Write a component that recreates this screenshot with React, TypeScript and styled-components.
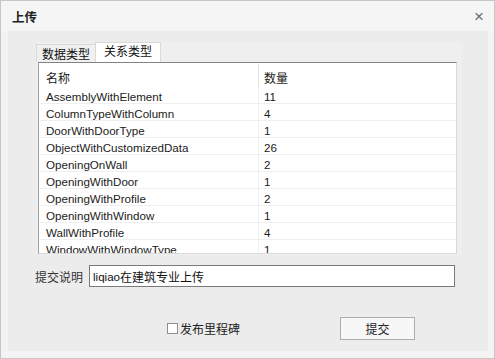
import React from 'react';
import styled, { createGlobalStyle } from 'styled-components';

const GlobalStyle = createGlobalStyle`
    html, body {
        margin: 0;
        padding: 0;
        background: #ffffff;
    }
    body {
        font-family: "Noto Sans", "Noto Sans CJK SC", sans-serif;
        font-size: 12px;
        color: #1b1b1b;
    }
`;

const CJK = `"Noto Sans CJK SC", "Noto Sans", sans-serif`;
const LATIN = `"Liberation Sans", "Noto Sans CJK SC", sans-serif`;

const Dialog = styled.div`
    width: 495px;
    height: 359px;
    box-sizing: border-box;
    border: 1px solid #c6c6c6;
    background: #f3f3f3;
    display: flex;
    flex-direction: column;
`;

const TitleBar = styled.div`
    height: 30px;
    flex: none;
    display: flex;
    align-items: center;
    justify-content: space-between;
    padding: 0 10px 0 11px;
    background: #f5f5f5;
`;

const Title = styled.div`
    font-family: ${CJK};
    font-weight: bold;
    font-size: 12.5px;
    color: #222;
`;

const CloseButton = styled.div`
    font-family: ${LATIN};
    font-size: 17px;
    color: #6d6d6d;
    line-height: 1;
`;

const Body = styled.div`
    flex: 1;
    padding: 0 6px 7px 7px;
    display: flex;
`;

const Panel = styled.div`
    flex: 1;
    background: #ececec;
    display: flex;
    flex-direction: column;
    padding: 11px 28px 0 28px;
`;

const TabControl = styled.div`
    background: #efefef;
    margin-right: -1px;
    height: 213px;
    display: flex;
    flex-direction: column;
`;

const TabStrip = styled.div`
    display: flex;
    align-items: flex-end;
    height: 20px;
`;

const Tab = styled.div<{ active?: boolean }>`
    font-family: ${CJK};
    font-size: 12px;
    line-height: 1;
    box-sizing: border-box;
    height: ${p => (p.active ? 20 : 18)}px;
    padding: ${p => (p.active ? '2px 8px 0 8px' : '3px 5px 0 5px')};
    border: 1px solid #d9d9d9;
    border-bottom: none;
    background: ${p => (p.active ? '#ffffff' : '#f0f0f0')};
    color: #111;
    margin-left: ${p => (p.active ? '-1px' : '0')};
`;

const TableBox = styled.div`
    margin-left: 2px;
    width: 419px;
    height: 192px;
    box-sizing: border-box;
    background: #ffffff;
    border-top: 1px solid #828282;
    border-left: 1px solid #a0a0a0;
    border-right: 1px solid #d9d9d9;
    border-bottom: 1px solid #d9d9d9;
    overflow: hidden;
`;

const Row = styled.div<{ header?: boolean }>`
    display: grid;
    grid-template-columns: 219px 1fr;
    height: ${p => (p.header ? 24 : 17)}px;
    box-sizing: border-box;
    border-bottom: ${p => (p.header ? 'none' : '1px solid #efefef')};
`;

const Cell = styled.div<{ header?: boolean; divider?: boolean }>`
    display: flex;
    align-items: center;
    padding-left: ${p => (p.divider ? 5 : 7)}px;
    padding-top: ${p => (p.header ? 3 : 2)}px;
    font-family: ${p => (p.header ? CJK : LATIN)};
    font-size: ${p => (p.header ? 12 : 11.6)}px;
    color: #1b1b1b;
    white-space: nowrap;
    border-left: ${p => (p.divider ? `1px solid ${p.header ? '#e2e2e2' : '#efefef'}` : 'none')};
    margin: ${p => (p.header ? '1px 0 0 0' : '0')};
`;

const FormRow = styled.div`
    display: flex;
    align-items: center;
    margin-top: 10px;
    margin-left: -1px;
`;

const Label = styled.div`
    font-family: ${CJK};
    font-size: 12px;
    color: #333;
    width: 54px;
`;

const TextInput = styled.div`
    width: 366px;
    height: 22px;
    box-sizing: border-box;
    border: 1px solid #7a7a7a;
    background: #fff;
    display: flex;
    align-items: center;
    padding-left: 3px;
    font-family: ${CJK};
    font-size: 12px;
    color: #111;
`;

const Latin = styled.span`
    font-family: ${LATIN};
    font-size: 11.6px;
`;

const ActionRow = styled.div`
    display: flex;
    align-items: center;
    margin-top: 30px;
    padding-left: 131px;
`;

const CheckLabel = styled.label`
    display: flex;
    align-items: center;
    gap: 2px;
    font-family: ${CJK};
    font-size: 12px;
    color: #222;
`;

const CheckBox = styled.span`
    width: 11px;
    height: 11px;
    box-sizing: border-box;
    border: 1px solid #8f8f8f;
    background: #fff;
    display: inline-block;
`;

const Button = styled.div`
    margin-left: 100px;
    width: 75px;
    height: 23px;
    box-sizing: border-box;
    border: 1px solid #adadad;
    background: #f7f7f7;
    display: flex;
    align-items: center;
    justify-content: center;
    font-family: ${CJK};
    font-size: 12px;
    color: #222;
`;

const rows: [string, number][] = [
    ['AssemblyWithElement', 11],
    ['ColumnTypeWithColumn', 4],
    ['DoorWithDoorType', 1],
    ['ObjectWithCustomizedData', 26],
    ['OpeningOnWall', 2],
    ['OpeningWithDoor', 1],
    ['OpeningWithProfile', 2],
    ['OpeningWithWindow', 1],
    ['WallWithProfile', 4],
    ['WindowWithWindowType', 1],
];

const App = () => (
    <>
        <GlobalStyle />
        <Dialog>
            <TitleBar>
                <Title>上传</Title>
                <CloseButton>×</CloseButton>
            </TitleBar>
            <Body>
                <Panel>
                    <TabControl>
                        <TabStrip>
                            <Tab>数据类型</Tab>
                            <Tab active>关系类型</Tab>
                        </TabStrip>
                        <TableBox>
                            <Row header>
                                <Cell header>名称</Cell>
                                <Cell header divider>数量</Cell>
                            </Row>
                            {rows.map(([name, count]) => (
                                <Row key={name}>
                                    <Cell>{name}</Cell>
                                    <Cell divider>{count}</Cell>
                                </Row>
                            ))}
                        </TableBox>
                    </TabControl>
                    <FormRow>
                        <Label>提交说明</Label>
                        <TextInput>
                            <Latin>liqiao</Latin>在建筑专业上传
                        </TextInput>
                    </FormRow>
                    <ActionRow>
                        <CheckLabel>
                            <CheckBox />
                            发布里程碑
                        </CheckLabel>
                        <Button>提交</Button>
                    </ActionRow>
                </Panel>
            </Body>
        </Dialog>
    </>
);

export default App;
